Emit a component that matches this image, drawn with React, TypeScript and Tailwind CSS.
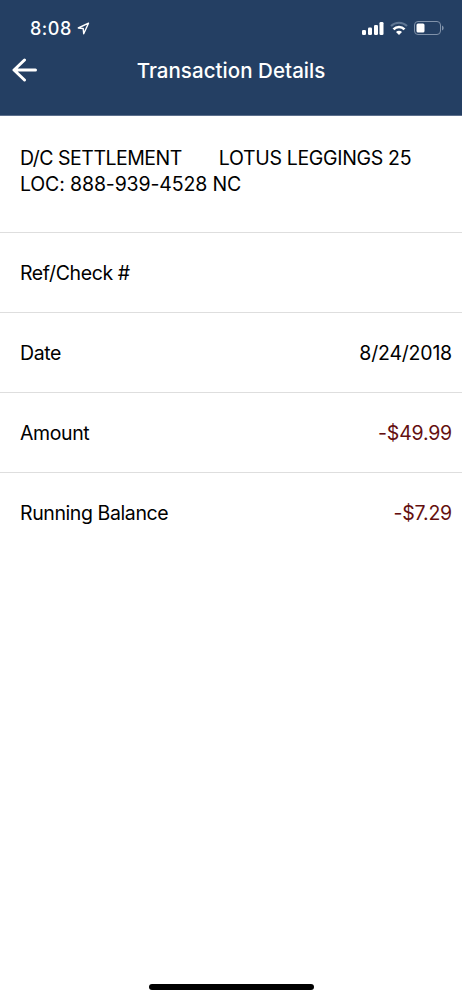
const rows = [
  { label: "Ref/Check #", value: "", negative: false },
  { label: "Date", value: "8/24/2018", negative: false },
  { label: "Amount", value: "-$49.99", negative: true },
  { label: "Running Balance", value: "-$7.29", negative: true },
];

function StatusBar() {
  return (
    <div className="flex h-[42px] items-start justify-between pt-[17px] pr-[17px] pl-[30px]">
      <div className="flex items-center gap-[5px]">
        <span className="text-[18px] leading-[23px] font-medium tracking-[0.5px]">8:08</span>
        <svg width="13" height="13" viewBox="0 0 13 13" fill="none" stroke="currentColor" strokeWidth="1.4" strokeLinejoin="round">
          <path d="M11.5 1.2 1.3 6l4.9.5.5 5.2z" />
        </svg>
      </div>
      <div className="flex items-center gap-[6px] pt-[4px]">
        <svg width="22" height="14" viewBox="0 0 22 14" fill="currentColor">
          <rect x="0" y="9" width="4" height="5" rx="1.3" />
          <rect x="6" y="6.5" width="4" height="7.5" rx="1.3" />
          <rect x="12" y="4" width="4" height="10" rx="1.3" />
          <rect x="17.5" y="1" width="4" height="13" rx="1.3" />
        </svg>
        <svg width="18" height="14" viewBox="0 0 18 14" fill="none" stroke="currentColor" strokeWidth="2.6">
          <path d="M1 5a11.5 11.5 0 0 1 16 0" stroke="#5f7693" strokeWidth="2.2" />
          <path d="M3.5 8.4a7.6 7.6 0 0 1 11 0" />
          <path d="M6 10.9a4.2 4.2 0 0 1 6 0L9 13.9z" fill="currentColor" stroke="none" />
        </svg>
        <svg width="31" height="14" viewBox="0 0 31 14">
          <rect x="0.5" y="0.5" width="26" height="13" rx="3.5" fill="none" stroke="#8092aa" />
          <rect x="2.5" y="2.5" width="8" height="9" rx="1.5" fill="currentColor" />
          <path d="M28 4.5c2.2.8 2.2 4.2 0 5z" fill="#8092aa" />
        </svg>
      </div>
    </div>
  );
}

export default function App() {
  return (
    <div className="flex h-[1000px] w-full flex-col bg-white font-[Inter,sans-serif] text-[19.5px] text-black">
      <header className="h-[116px] border-b border-[#5c6f8c] bg-[#243f63] text-white">
        <StatusBar />
        <div className="grid h-[57px] grid-cols-[50px_1fr_50px] items-center">
          <svg className="mb-px ml-3" width="26" height="24" viewBox="0 0 26 24" fill="none" stroke="currentColor" strokeWidth="3" strokeLinecap="round" strokeLinejoin="round">
            <path d="M23.5 12H2.5M12.5 2 2 12l10.500 10" />
          </svg>
          <h1 className="pt-[2px] text-center text-[20.5px] font-medium tracking-[0.05px]">Transaction Details</h1>
        </div>
      </header>
      <main>
        <div className="h-[117px] border-b border-[#dedede] pt-[29px] pl-5 leading-[26px]">
          <p className="flex gap-[37px] whitespace-nowrap">
            <span className="tracking-[-0.5px]">D/C SETTLEMENT</span>
            <span className="tracking-[-0.33px]">LOTUS LEGGINGS 25</span>
          </p>
          <p className="tracking-[-0.14px]">LOC: 888-939-4528 NC</p>
        </div>
        {rows.map((row) => (
          <div
            key={row.label}
            className="flex h-20 items-center justify-between border-b border-[#dedede] pt-[2px] pr-[10px] pl-5 last:border-b-0 last:pt-px"
          >
            <span className="tracking-[-0.4px]">{row.label}</span>
            <span className={row.negative ? "tracking-[-0.2px] text-[#640f0f]" : "tracking-[-0.2px]"}>{row.value}</span>
          </div>
        ))}
      </main>
      <div className="mt-auto mb-[10px] h-[6px] w-[165px] self-center rounded-full bg-black" />
    </div>
  );
}
